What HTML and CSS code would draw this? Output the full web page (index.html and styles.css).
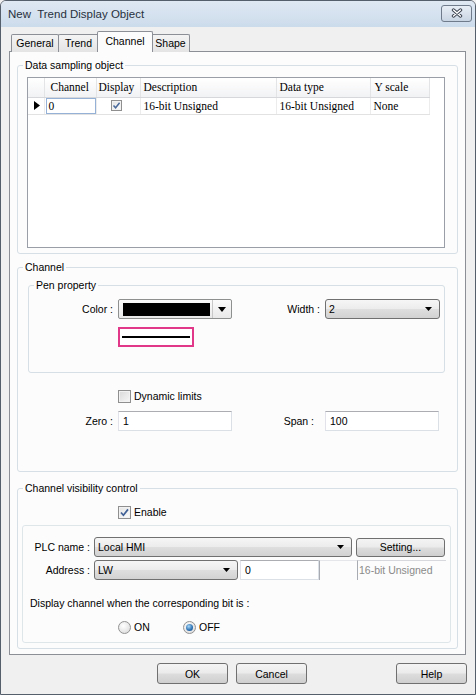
FILE: index.html
```html
<!DOCTYPE html>
<html lang="en">
<head>
  <meta charset="UTF-8">
  <meta name="viewport" content="width=device-width, initial-scale=1.0">
  <title>New Trend Display Object</title>
  <link rel="stylesheet" href="styles.css">
</head>
<body>
  <div class="window">

    <!-- Title bar -->
    <div class="titlebar">
      <span class="title">New  Trend Display Object</span>
      <span class="close-btn">
        <svg width="12" height="10" viewBox="0 0 12 10">
          <path d="M2.5 2 L9.5 8 M9.5 2 L2.5 8" stroke="#3c4450" stroke-width="3.4" stroke-linecap="round"/>
          <path d="M2.5 2 L9.5 8 M9.5 2 L2.5 8" stroke="#ffffff" stroke-width="1.5" stroke-linecap="round"/>
        </svg>
      </span>
    </div>

    <!-- Tabs -->
    <div class="tabs">
      <div class="tab tab-general">General</div>
      <div class="tab tab-trend">Trend</div>
      <div class="tab tab-channel active">Channel</div>
      <div class="tab tab-shape">Shape</div>
    </div>

    <!-- Channel tab page -->
    <div class="tab-page">

      <fieldset class="group" id="samplingGroup">
        <legend>Data sampling object</legend>
        <div class="grid">
          <table class="channel-table">
            <thead>
              <tr>
                <th class="col-mark"></th>
                <th class="col-channel">Channel</th>
                <th class="col-display">Display</th>
                <th class="col-desc">Description</th>
                <th class="col-type">Data type</th>
                <th class="col-scale">Y scale</th>
              </tr>
            </thead>
            <tbody>
              <tr>
                <td class="col-mark">
                  <svg width="6" height="9" viewBox="0 0 6 9"><polygon points="0,0 6,4.5 0,9" fill="#000"/></svg>
                </td>
                <td class="col-channel"><div class="cell-edit">0</div></td>
                <td class="col-display"><span class="chk chk-small checked">
                  <svg width="9" height="9" viewBox="0 0 9 9"><path d="M1.5 4.5 L3.6 6.8 L7.6 1.8" stroke="#4a6a9c" stroke-width="1.5" fill="none"/></svg>
                </span></td>
                <td>16-bit Unsigned</td>
                <td>16-bit Unsigned</td>
                <td>None</td>
              </tr>
            </tbody>
          </table>
        </div>
      </fieldset>

      <fieldset class="group" id="channelGroup">
        <legend>Channel</legend>

        <fieldset class="group" id="penGroup">
          <legend>Pen property</legend>
          <div class="form-row pen-row">
            <span class="form-label label-color">Color :</span>
            <div class="color-combo">
              <span class="swatch"></span>
              <span class="color-arrow">
                <svg width="8" height="5" viewBox="0 0 8 5"><polygon points="0,0 8,0 4,5" fill="#000"/></svg>
              </span>
            </div>
            <span class="form-label label-width">Width :</span>
            <div class="combo combo-width">
              <span>2</span>
              <svg width="7" height="4" viewBox="0 0 7 4"><polygon points="0,0 7,0 3.5,4" fill="#000"/></svg>
            </div>
          </div>
          <div class="pen-preview"><div class="pen-line"></div></div>
        </fieldset>

        <div class="check-row limits-row">
          <span class="chk"></span>
          <span>Dynamic limits</span>
        </div>

        <div class="form-row limits-values">
          <span class="form-label label-zero">Zero :</span>
          <div class="textbox box-zero">1</div>
          <span class="form-label label-span">Span :</span>
          <div class="textbox box-span">100</div>
        </div>
      </fieldset>

      <fieldset class="group" id="visibilityGroup">
        <legend>Channel visibility control</legend>

        <div class="check-row enable-row">
          <span class="chk checked">
            <svg width="11" height="11" viewBox="0 0 11 11"><path d="M2 5.5 L4.4 8.2 L9 2.4" stroke="#3f5f95" stroke-width="1.7" fill="none"/></svg>
          </span>
          <span>Enable</span>
        </div>

        <div class="inner-box">
          <div class="form-row">
            <span class="form-label label-plc">PLC name :</span>
            <div class="combo combo-plc">
              <span>Local HMI</span>
              <svg width="7" height="4" viewBox="0 0 7 4"><polygon points="0,0 7,0 3.5,4" fill="#000"/></svg>
            </div>
            <button class="btn btn-setting">Setting...</button>
          </div>
          <div class="form-row address-row">
            <span class="form-label label-plc">Address :</span>
            <div class="combo combo-address">
              <span>LW</span>
              <svg width="7" height="4" viewBox="0 0 7 4"><polygon points="0,0 7,0 3.5,4" fill="#000"/></svg>
            </div>
            <div class="textbox box-address">0</div>
            <div class="blank-field"></div>
            <div class="blank-field type-field">16-bit Unsigned</div>
          </div>
          <div class="bit-text">Display channel when the corresponding bit is :</div>
          <div class="radio-row">
            <span class="radio-item">
              <span class="radio"></span>
              <span>ON</span>
            </span>
            <span class="radio-item">
              <span class="radio selected"><span class="dot"></span></span>
              <span>OFF</span>
            </span>
          </div>
        </div>
      </fieldset>

    </div>

    <!-- Dialog buttons -->
    <div class="dialog-buttons">
      <button class="btn btn-dialog">OK</button>
      <button class="btn btn-dialog">Cancel</button>
      <button class="btn btn-dialog btn-help">Help</button>
    </div>

  </div>
</body>
</html>
```

FILE: styles.css
```css
* {
  box-sizing: border-box;
}

body {
  margin: 0;
  background-color: #f0f0f0;
  font-family: "Liberation Sans", Arial, sans-serif;
  font-size: 10.5px;
  color: #000;
}

.window {
  width: 476px;
  height: 695px;
  border: 1px solid #555e6b;
  border-radius: 6px 6px 0 0;
  background-color: #f0f0f0;
  overflow: hidden;
}

/* title bar */
.titlebar {
  height: 26px;
  display: flex;
  align-items: center;
  justify-content: space-between;
  padding: 0 3px 0 7px;
  background: linear-gradient(#dfe8f3, #ccdbeb);
}

.title {
  font-size: 11.5px;
  color: #27313d;
  white-space: pre;
}

.close-btn {
  width: 31px;
  height: 17px;
  margin-top: -2px;
  display: flex;
  align-items: center;
  justify-content: center;
  border: 1px solid #6f7b8b;
  border-radius: 3px;
  background: linear-gradient(#e8eef5, #c9d5e3);
}

/* tabs */
.tabs {
  display: flex;
  align-items: flex-end;
  height: 25px;
  padding-left: 10px;
  margin-bottom: -1px;
}

.tab {
  height: 18px;
  line-height: 16px;
  text-align: center;
  border: 1px solid #8c8f96;
  border-bottom: none;
  border-radius: 2px 2px 0 0;
  background: linear-gradient(#f4f4f4, #e4e4e4);
  margin-right: -1px;
}

.tab-general { width: 48px; }
.tab-trend { width: 41px; }
.tab-channel { width: 56px; }
.tab-shape { width: 39px; }

.tab.active {
  height: 21px;
  line-height: 18px;
  background: #fcfcfc;
  margin-left: -1px;
  margin-right: -2px;
  position: relative;
  z-index: 1;
}

.tab-page {
  width: 457px;
  height: 604px;
  margin-left: 8px;
  padding: 0 7px;
  border: 1px solid #8c8f96;
  background-color: #fcfcfc;
  overflow: hidden;
}

/* group boxes */
.group {
  margin: 6px 0 0;
  padding: 0;
  min-width: 0;
  border: 1px solid #d5dfe5;
  border-radius: 3px;
}

.group legend {
  margin-left: 5px;
  padding: 0 2px;
  line-height: 14px;
}

#samplingGroup {
  padding-bottom: 5px;
}

#channelGroup {
  padding-bottom: 40px;
}

#penGroup {
  margin: 4px 12px 0 10px;
  padding-bottom: 25px;
}

#visibilityGroup {
  margin-top: 9px;
  padding-bottom: 5px;
}

/* sampling grid */
.grid {
  width: 418px;
  height: 171px;
  margin: 5px 0 0 9px;
  border: 1px solid #9a9ea6;
  background-color: #fff;
}

.channel-table {
  width: 401px;
  table-layout: fixed;
  border-collapse: collapse;
  font-family: "Liberation Serif", "Times New Roman", serif;
  font-size: 11.5px;
}

.channel-table th {
  height: 19px;
  padding: 0 0 0 3px;
  font-weight: normal;
  text-align: left;
  background: linear-gradient(#ffffff, #f1f2f4);
  border-right: 1px solid #e3e4e6;
  border-bottom: 1px solid #d6d7da;
}

.channel-table td {
  height: 16px;
  padding: 0 0 0 3px;
  border-right: 1px solid #ececec;
  border-bottom: 1px solid #e2e2e2;
  white-space: nowrap;
}

.channel-table .col-mark { width: 16px; padding-left: 6px; }
.channel-table .col-channel { width: 52px; }
.channel-table .col-display { width: 44px; }
.channel-table .col-desc { width: 136px; }
.channel-table .col-type { width: 94px; }
.channel-table .col-scale { width: 59px; }

.channel-table th.col-channel { padding-left: 6px; }
.channel-table th.col-display { padding-left: 2px; }
.channel-table th.col-scale { padding-left: 4px; }

.channel-table td.col-mark svg {
  display: block;
}

.channel-table td.col-channel {
  padding: 0 0 0 1px;
}

.channel-table td.col-display {
  padding-left: 14px;
}

.cell-edit {
  width: 50px;
  height: 16px;
  line-height: 14px;
  padding-left: 2px;
  border: 1px solid #95b1d6;
  background-color: #fff;
}

/* form rows */
.form-row {
  display: flex;
  align-items: center;
  height: 20px;
}

.form-label {
  flex-shrink: 0;
  text-align: right;
}

.pen-row {
  margin-top: 7px;
}

.label-color {
  width: 84px;
  margin-right: 5px;
}

.label-width {
  width: 88px;
  margin-right: 5px;
}

.color-combo {
  width: 114px;
  height: 20px;
  display: flex;
  align-items: center;
  border: 1px solid #8e8f8f;
  border-radius: 2px;
  background: linear-gradient(#fbfbfb, #e9e9e9);
}

.swatch {
  width: 87px;
  height: 13px;
  margin-left: 4px;
  background-color: #000;
}

.color-arrow {
  flex: 1;
  height: 18px;
  margin-left: 2px;
  display: flex;
  align-items: center;
  justify-content: center;
  border-left: 1px solid #c8c8c8;
}

.combo {
  height: 20px;
  display: flex;
  align-items: center;
  justify-content: space-between;
  padding: 0 7px 0 3px;
  border: 1px solid #707070;
  border-radius: 3px;
  background: linear-gradient(#f6f6f6, #ececec 48%, #dedede 52%, #d2d2d2);
}

.combo-width {
  width: 115px;
}

.pen-preview {
  width: 76px;
  height: 20px;
  margin: 8px 0 0 89px;
  padding: 0 2px;
  display: flex;
  align-items: center;
  border: 2px solid #e2388a;
  background-color: #fff;
}

.pen-line {
  width: 100%;
  height: 2px;
  background-color: #000;
}

/* checkboxes and radios */
.check-row {
  display: flex;
  align-items: center;
  height: 14px;
  margin-left: 100px;
}

.chk {
  width: 13px;
  height: 13px;
  margin-right: 3px;
  display: flex;
  align-items: center;
  justify-content: center;
  border: 1px solid #8f8f8f;
  background: linear-gradient(135deg, #d9d9d9, #f7f7f7);
  box-shadow: inset 0 0 0 1px #f2f2f2;
}

.chk.checked {
  background: linear-gradient(135deg, #e4e4e4, #fbfbfb);
}

.chk-small {
  width: 11px;
  height: 11px;
}

.limits-row {
  margin-top: 16px;
}

.limits-values {
  margin-top: 8px;
}

.textbox {
  height: 20px;
  line-height: 18px;
  padding-left: 4px;
  border: 1px solid #dbdfe6;
  border-top-color: #abadb3;
  border-left-color: #e2e3ea;
  background-color: #fff;
}

.label-zero {
  width: 95px;
  margin-right: 5px;
}

.box-zero,
.box-span {
  width: 114px;
}

.label-span {
  width: 82px;
  margin-right: 11px;
}

.enable-row {
  margin-top: 10px;
}

.inner-box {
  margin: 6px 6px 0 4px;
  padding: 11px 0 8px;
  border: 1px solid #dfe6ea;
  border-radius: 3px;
}

.label-plc {
  width: 67px;
  margin-right: 4px;
}

.combo-plc {
  width: 258px;
}

.btn {
  height: 19px;
  padding: 0;
  font-family: "Liberation Sans", Arial, sans-serif;
  font-size: 10.5px;
  color: #000;
  border: 1px solid #707070;
  border-radius: 3px;
  background: linear-gradient(#f4f4f4, #ebebeb 48%, #dddddd 52%, #cfcfcf);
}

.btn-setting {
  width: 89px;
  margin-left: 4px;
}

.address-row {
  margin-top: 3px;
}

.combo-address {
  width: 144px;
  margin-right: 2px;
}

.box-address {
  width: 79px;
}

.blank-field {
  width: 38px;
  height: 20px;
  border-left: 1px solid #a9abb2;
  border-top: 1px solid #e4e6ea;
}

.type-field {
  width: 89px;
  padding-left: 1px;
  line-height: 18px;
  color: #8a8a8a;
  border-top-color: #d6d8dd;
}

.bit-text {
  margin: 16px 0 0 7px;
  line-height: 14px;
}

.radio-row {
  display: flex;
  align-items: center;
  height: 14px;
  margin: 10px 0 0 95px;
}

.radio-item {
  width: 65px;
  display: flex;
  align-items: center;
}

.radio {
  width: 13px;
  height: 13px;
  margin-right: 3px;
  display: flex;
  align-items: center;
  justify-content: center;
  border: 1px solid #929292;
  border-radius: 50%;
  background: radial-gradient(circle at 40% 35%, #ffffff, #d6d6d6);
}

.radio .dot {
  width: 7px;
  height: 7px;
  border-radius: 50%;
  background: radial-gradient(circle at 40% 35%, #a8d8f8, #2a6fb0 60%, #174f88);
}

/* bottom buttons */
.dialog-buttons {
  display: flex;
  margin-top: 8px;
  padding: 0 8px 0 156px;
}

.btn-dialog {
  width: 71px;
  height: 21px;
  margin-right: 8px;
}

.btn-help {
  margin-left: auto;
  margin-right: 0;
}
```
